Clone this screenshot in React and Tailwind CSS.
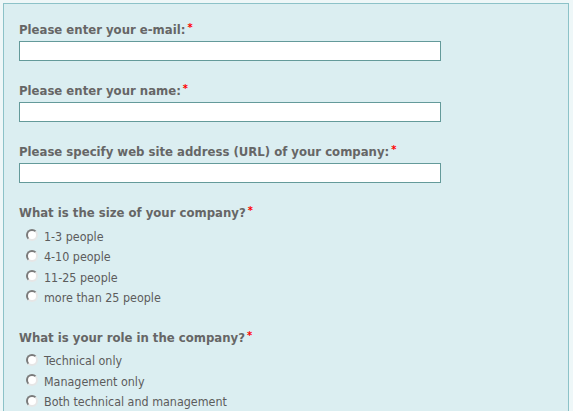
import React from "react";

const fields = [
  "Please enter your e-mail:",
  "Please enter your name:",
  "Please specify web site address (URL) of your company:",
];

const questions = [
  {
    title: "What is the size of your company?",
    options: ["1-3 people", "4-10 people", "11-25 people", "more than 25 people"],
  },
  {
    title: "What is your role in the company?",
    options: ["Technical only", "Management only", "Both technical and management"],
  },
];

function Label({ children }) {
  return (
    <div className="h-[17px] text-[13px] font-bold leading-[17px] text-[#666666]">
      {children}
      <span className="relative -top-[3px] ml-[2px] text-[11px] text-[#ff0000]">*</span>
    </div>
  );
}

function Radio({ label }) {
  return (
    <label className="flex h-[20.4px] items-center">
      <span className="ml-[7px] mb-[4px] h-[12px] w-[12px] rounded-full border-2 border-t-[#7a7a7a] border-l-[#7a7a7a] border-b-[#e6e6e6] border-r-[#e6e6e6] bg-white" />
      <span className="ml-[6px] text-[12.4px] text-[#5c5c5c]">{label}</span>
    </label>
  );
}

export default function App() {
  return (
    <div
      className="min-h-[411px] bg-[#eef7f8] pl-[3px] pt-[3px]"
      style={{ fontFamily: '"DejaVu Sans Condensed", "DejaVu Sans", sans-serif' }}
    >
      <div className="w-[566px] min-h-[408px] border-l border-t border-r border-[#8cc2c8] bg-[#dbeef1] pl-[15px] pt-[17px]">
        {fields.map((f) => (
          <div key={f} className="mb-[21px]">
            <Label>{f}</Label>
            <input
              type="text"
              className="mt-[3px] block h-[20px] w-[422px] border border-[#649a9a] bg-white outline-none"
            />
          </div>
        ))}
        {questions.map((q) => (
          <div key={q.title} className="mb-[20px]">
            <Label>{q.title}</Label>
            <div className="mt-[6px]">
              {q.options.map((o) => (
                <Radio key={o} label={o} />
              ))}
            </div>
          </div>
        ))}
      </div>
    </div>
  );
}
